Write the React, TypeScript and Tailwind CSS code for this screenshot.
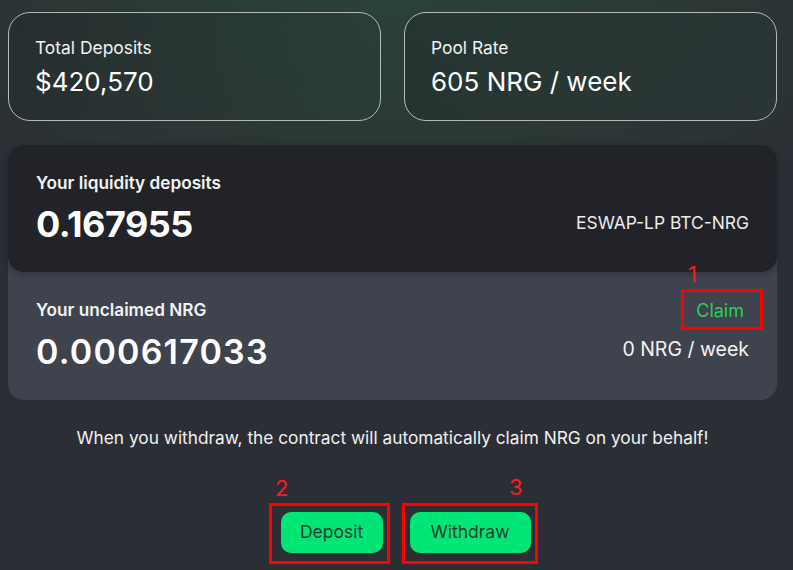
import React from 'react';

const StatCard = ({ label, value }: { label: string; value: string }) => (
  <div className="h-[109px] rounded-[22px] border border-[#b5bab8] px-[26px] pt-[23px] bg-[linear-gradient(135deg,rgba(30,32,36,0.35),rgba(40,70,60,0.15))]">
    <div className="text-[17.4px] leading-[24px] text-[#f1f2f2]">{label}</div>
    <div className="mt-[6px] text-[26px] leading-[32px] text-white">{value}</div>
  </div>
);

const RedBox = ({ className, n, numClass }: { className: string; n: string; numClass: string }) => (
  <>
    <div className={`absolute border-[3px] border-[#ff0000] ${className}`} />
    <div className={`absolute text-[22px] leading-none text-[#ff1a1a] ${numClass}`}>{n}</div>
  </>
);

export default function App() {
  return (
    <div
      className="relative w-[793px] h-[570px] overflow-hidden bg-[#2b2e35] bg-[radial-gradient(ellipse_70%_45%_at_50%_0%,#2a4238_0%,#2b3a36_45%,#2b2e35_100%)] text-white"
      style={{ fontFamily: 'Inter, "Noto Sans", sans-serif' }}
    >
      <div className="ml-2 w-[769px] pt-3">
        <div className="grid grid-cols-2 gap-[23px]">
          <StatCard label="Total Deposits" value="$420,570" />
          <StatCard label="Pool Rate" value="605 NRG / week" />
        </div>

        <div className="mt-6 rounded-2xl bg-[#3f434d]">
          <div className="flex h-[127px] items-end justify-between rounded-2xl bg-[#222328] px-7 pb-[26px] shadow-[0_2px_6px_rgba(0,0,0,0.25)]">
            <div>
              <div className="text-[17.2px] font-semibold leading-[22px] text-[#f3f3f3]">Your liquidity deposits</div>
              <div className="mt-[8px] text-[36px] font-bold leading-[44px] tracking-[-0.5px] text-white">0.167955</div>
            </div>
            <div className="mb-[11px] text-[17.4px] leading-[24px] text-[#ececec]">ESWAP-LP BTC-NRG</div>
          </div>
          <div className="flex h-[128px] justify-between px-7 pt-[27px]">
            <div>
              <div className="text-[17.2px] font-semibold leading-[22px] text-[#f3f3f3]">Your unclaimed NRG</div>
              <div className="mt-[9px] text-[34px] font-semibold leading-[44px] tracking-[1.2px] text-white">0.000617033</div>
            </div>
            <div className="flex flex-col items-end">
              <div className="mr-[5px] text-[18px] leading-[24px] text-[#2ecc5a]">Claim</div>
              <div className="mt-[14px] text-[19.5px] leading-[24px] text-[#f3f3f3]">0 NRG / week</div>
            </div>
          </div>
        </div>

        <p className="mt-[26px] text-center text-[17.3px] leading-[24px] text-[#f1f1f1]">
          When you withdraw, the contract will automatically claim NRG on your behalf!
        </p>

        <div className="mt-[62px] flex justify-center gap-[27px] pl-[26px]">
          <button className="h-[41px] w-[102px] rounded-[10px] bg-[#00e676] text-[17.5px] text-[#1f3d30]">Deposit</button>
          <button className="h-[41px] w-[121px] rounded-[10px] bg-[#00e676] text-[17.5px] text-[#1f3d30]">Withdraw</button>
        </div>
      </div>

      <RedBox className="left-[681px] top-[289px] h-[41px] w-[82px]" n="1" numClass="left-[688px] top-[263px]" />
      <RedBox className="left-[269px] top-[503px] h-[61px] w-[121px]" n="2" numClass="left-[275px] top-[477px]" />
      <RedBox className="left-[402px] top-[503px] h-[61px] w-[136px]" n="3" numClass="left-[509px] top-[476px]" />
    </div>
  );
}
